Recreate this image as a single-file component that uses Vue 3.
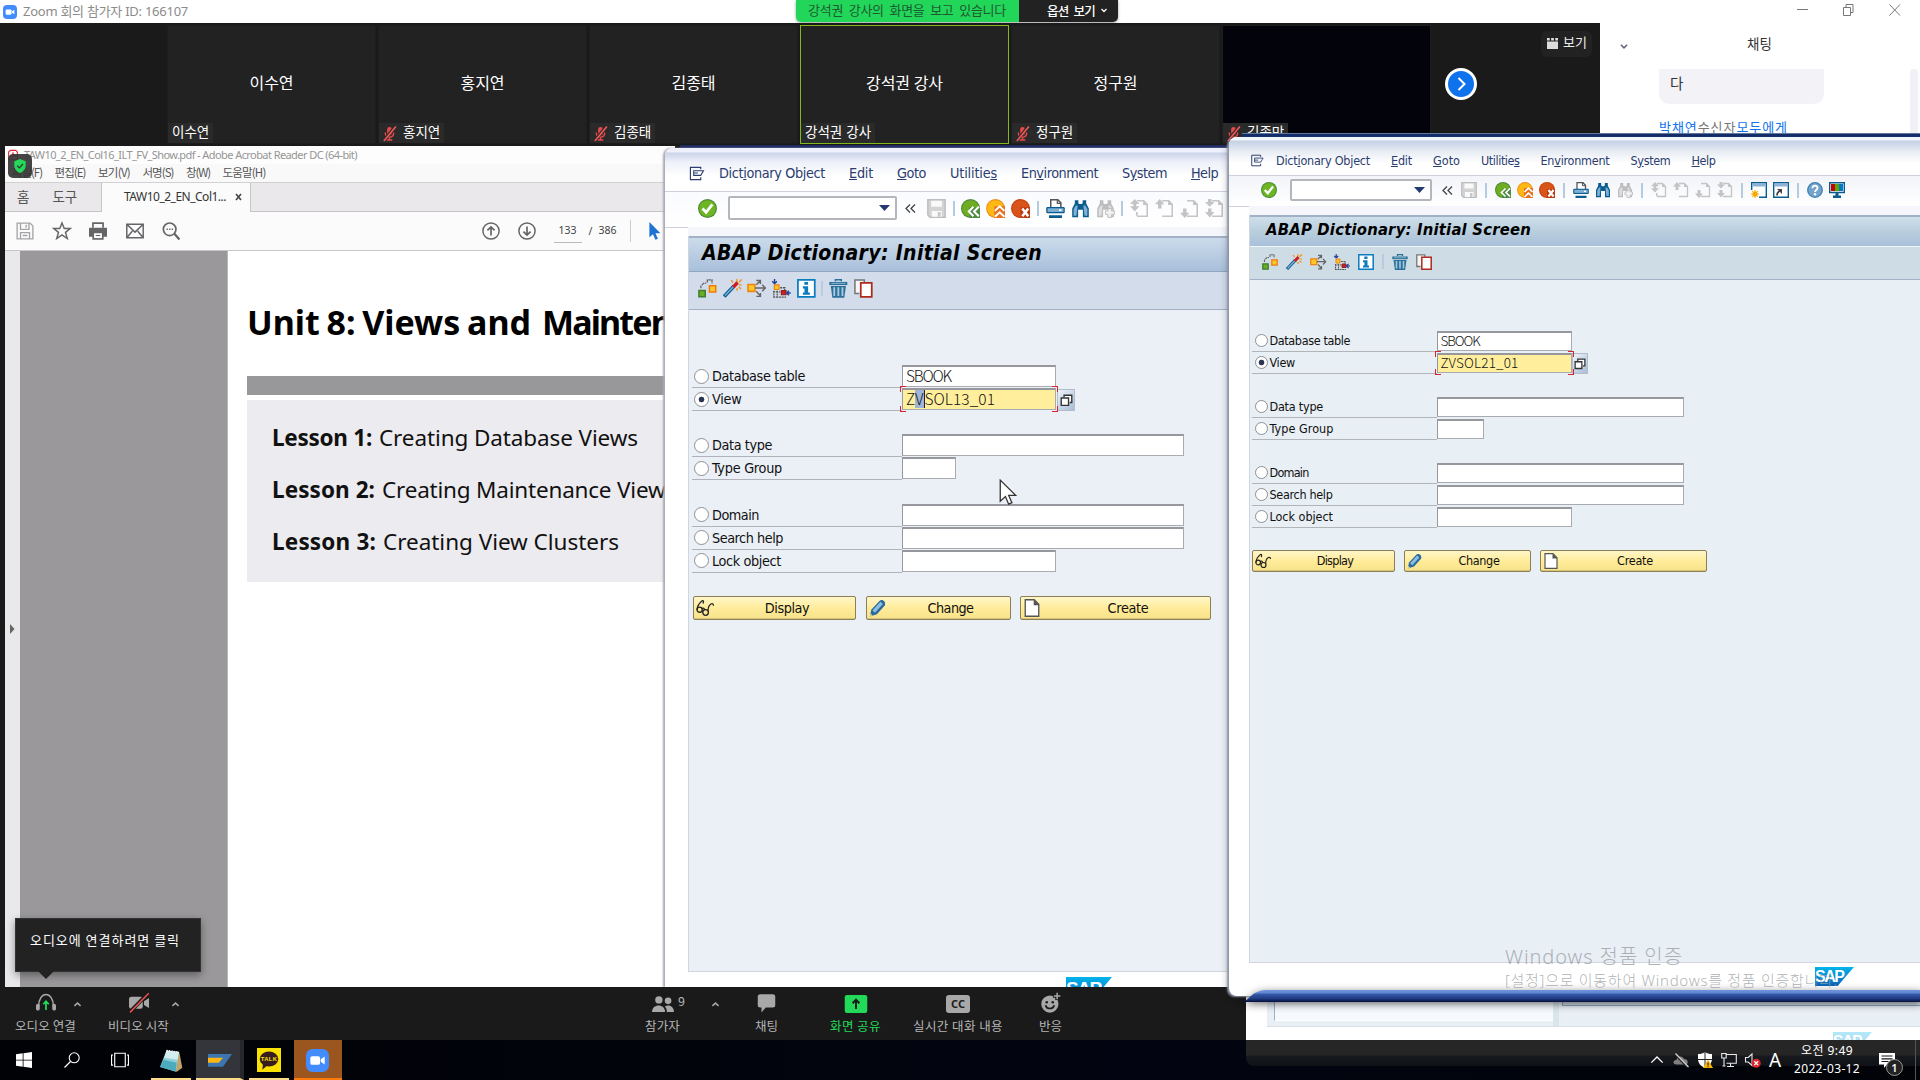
<script setup>
import { h } from 'vue'

const page = '<path d="M6 1.5h5.5l3 3v10H6" fill="none" stroke="#c4c4c4" stroke-width="1.3"/><path d="M11 1v4h4z" fill="#c4c4c4"/>'
const binoc = (a, b) => `<path d="M3.2 1h3v2.5l.8.8h2l.8-.8V1h3v2.8L15 8v7.3h-5V9H6v6.300H1V8l2.200-4.200z" fill="${a}"/><path d="M4 5.500h1.600L4.600 14H2.200V8.500zM12 5.500h-1.600l1 8.500h2.400V8.500z" fill="${b}"/>`
const icons = {
  exit: '<path d="M12.500 3.500V1.500H1.500v13h11v-2.500" fill="none" stroke="currentColor" stroke-width="1.200"/><path d="M5 5h10.500L12.500 10H5zM5 7.500h4.500" fill="#fff" stroke="currentColor" stroke-width="1.100"/>',
  ok: '<circle cx="8" cy="8" r="8" fill="#4d8a3c"/><circle cx="8" cy="8" r="7" fill="#6db523"/><path d="M3.800 8l3 3.200 5.300-6.700" fill="none" stroke="#fff" stroke-width="2.300"/>',
  save: '<path d="M.7.700h14.600v14.600H2.500L.7 13.500z" fill="#d3d3d3" stroke="#bdbdbd" stroke-width="1.200"/><path d="M3.500 1.500h9v5h-9zM4 10h8.500v5H4z" fill="#fafafa"/><path d="M9 11h2.500v4H9z" fill="#c9c9c9"/>',
  back: '<circle cx="8" cy="8" r="8" fill="#4d8a3c"/><circle cx="8" cy="8" r="7" fill="#6eac22"/><path d="M7 7h9v9H7z" fill="#4f8a45"/><path d="M10.500 6.500L6.500 10.500l4 4M15 6.500l-4 4 4 4" fill="none" stroke="#fff" stroke-width="1.700"/>',
  up: '<circle cx="8" cy="8" r="7.900" fill="#f08a14"/><circle cx="8" cy="8" r="7" fill="#fdb813"/><path d="M7 6h9v10H7z" fill="#e9701c"/><path d="M7.500 10l4-3.800 4 3.800M7.500 15l4-3.800 4 3.800" fill="none" stroke="#fff" stroke-width="1.700"/>',
  cancel: '<circle cx="8" cy="8" r="8" fill="#c8420f"/><circle cx="8" cy="8" r="7" fill="#d9541a"/><path d="M8 7h8v9H8z" fill="#bd3b12"/><path d="M9.500 8l5 6.500M14.500 8l-5 6.500" stroke="#fff" stroke-width="2.100"/>',
  print: '<path d="M4 7V.7h6l2.500 2.500V7" fill="#fff" stroke="#555" stroke-width="1.300"/><path d="M9.500 1v2.700h3" fill="none" stroke="#555"/><rect x=".2" y="6.700" width="15.600" height="5.300" rx="1" fill="#0b5c8e"/><rect x="1.300" y="7.800" width="13.400" height="3.100" fill="#7eb0d4"/><path d="M11 8.700h2v1.300h-2z" fill="#fff"/><path d="M2.500 13.700h11V16h-11z" fill="#0b5c8e"/>',
  find: binoc('#0b5c8e', '#7fb0d6'),
  findn: binoc('#bdbdbd', '#dedede') + '<path d="M8 10h2V8h3v2h2.500v3H13v2.500h-3V13H8z" fill="#f2f2f2" stroke="#bdbdbd" stroke-width=".8"/>',
  p1: page + '<path d="M4 0l4 4.200H5.300v2H8l-4 4.300L0 6.200h2.700v-2H0zM5 11h1.500v3H5z" fill="#c4c4c4"/>',
  p2: page + '<path d="M4 0l4 4.500H5.500V8h-3V4.500H0z" fill="#c4c4c4"/>',
  p3: page + '<path d="M4 16l4-4.500H5.500V8h-3v3.500H0z" fill="#c4c4c4"/>',
  p4: page + '<path d="M2.500 0h3v2.500H8L4 6.500 0 2.500h2.500zM2.500 8h3v3H8l-4 4.500L0 11h2.500z" fill="#c4c4c4"/>',
  newwin: '<path d="M.7.700h14.600v14.600H.7z" fill="#fff" stroke="#0b5c8e" stroke-width="1.400"/><path d="M1.300 1.300h13.400v3.200H1.300z" fill="#8db4d8"/><path d="M0 8h8v8H0z" fill="#fff"/><circle cx="4" cy="12" r="2.500" fill="#f7a800"/><path d="M4 8v8M0 12h8M1.200 9.200l5.600 5.600M6.800 9.200l-5.600 5.600" stroke="#f7a800" stroke-width="1.100"/>',
  shortcut: '<path d="M.7.700h14.600v14.600H.7z" fill="#fff" stroke="#0b5c8e" stroke-width="1.400"/><path d="M1.300 1.300h13.400v3.200H1.300z" fill="#8db4d8"/><path d="M4 13.500c0-3 1-4 3-4.500" fill="none" stroke="#444" stroke-width="1.700"/><path d="M4 7h5v5z" fill="#444"/>',
  help: '<circle cx="8" cy="8" r="7.300" fill="#74a4cc" stroke="#3f7fb3" stroke-width="1.300"/><path d="M5.500 6.300c0-3.500 5-3.300 5-.3 0 2-2.500 2-2.500 3.900" fill="none" stroke="#fff" stroke-width="1.800"/><circle cx="8" cy="12.200" r="1.200" fill="#fff"/>',
  monitor: '<path d="M.7.700h14.600v9.800H.7z" fill="#fff" stroke="#0b5c8e" stroke-width="1.400"/><path d="M2 2h4v7H2z" fill="#c80000"/><path d="M6 2h4v7H6z" fill="#59a800"/><path d="M10 2h4v7h-4z" fill="#0079c8"/><path d="M6.500 11h3v2.500H12V16H4v-2.500h2.500z" fill="#0b5c8e"/>',
  boxes: '<path d="M.8 9.800h5.400v5.400H.8z" fill="#6aad24" stroke="#3f7f2f" stroke-width="1.300"/><path d="M9.800 5.800h5.400v5.400H9.800z" fill="#ffc629" stroke="#ee7b12" stroke-width="1.300"/><path d="M2.500 8V6L5 3.500l2 0M8 3V.7h4V4" fill="none" stroke="#666" stroke-width="1.100" stroke-dasharray="2.500 .6"/>',
  wand: '<path d="M1 15L9.500 6" stroke="#0b5c8e" stroke-width="3.200"/><path d="M1.700 14.200L9.300 6.200" stroke="#79aed6" stroke-width="1.300"/><path d="M7 1l1.500 2M12 0v2.500M16 .5l-2.500 2.200M16 5h-2.500M15.500 8.500l-2-1.500M12 8v2" stroke="#f39317" stroke-width="1.200"/><path d="M8.800 7l3.700-4" stroke="#cf1d1d" stroke-width="3"/>',
  where: '<path d="M.8 4.800h6v5.800h-6z" fill="#ffc629" stroke="#ee8412" stroke-width="1.300"/><path d="M7 7.700h8.500M13 5l2.700 2.700L13 10.500M8 5l3-3M8 1.300h3.500v3M8 10.500l3 3.500M8 14.900h3.500v-3" fill="none" stroke="#666" stroke-width="1.200"/>',
  tree: '<path d="M2.200 0v3.500M.2 2l2 2 2-2" fill="none" stroke="#21409a" stroke-width="1.200"/><path d="M2 5h4v4H2z" fill="#ffc629" stroke="#ee8412"/><path d="M8 10h4v3.500H8z" fill="#d31f1f" stroke="#8a2222"/><path d="M1.500 10v6M1 15.500h11M4.500 10v6M1 11h6M7 7.500h4v2" fill="none" stroke="#555" stroke-width="1.100" stroke-dasharray="1.800 .6"/><path d="M16 12h-3.500M14.500 10l-2 2 2 2" fill="none" stroke="#21409a" stroke-width="1.200"/>',
  info: '<path d="M.8.800h14.400v14.400H.8z" fill="#fff" stroke="#0b7cc0" stroke-width="1.500"/><path d="M6.300 2.500h3.200v2.400H6.300zM5 6.200h4.500v5.300H11v2H5v-2h1.400V8.200H5z" fill="#0b7cc0"/>',
  trash: '<path d="M5.500 2V.7h5V2" fill="none" stroke="#2c7099" stroke-width="1.300"/><path d="M.3 2.500h15.400v2.700H.3z" fill="#2c7099"/><path d="M1.500 6h13l-1.400 10H2.900z" fill="#2c7099"/><path d="M4.500 7v7.500M8 7v7.500M11.500 7v7.500" stroke="#a7cbe0" stroke-width="1.600"/><path d="M2 3.700h12" stroke="#8dbbd8" stroke-width=".8"/>',
  copy: '<path d="M4.500 12.500H.8V.8h8v2" fill="#f6f6f6" stroke="#757575" stroke-width="1.300"/><path d="M5.800 3.300h9.400v12H5.800z" fill="#fff" stroke="#b02a1c" stroke-width="1.500"/>',
  glasses: '<path d="M1 9.500C1 6 3 3.500 5.500 1.500 7 1 7 3 6 4" fill="none" stroke="#222" stroke-width="1.100"/><circle cx="3.200" cy="9.500" r="2.300" fill="none" stroke="#222" stroke-width="1.200"/><circle cx="8.500" cy="12" r="2.500" fill="none" stroke="#222" stroke-width="1.200"/><path d="M5.300 8.500c1.500-1 2.200 0 2.200 1.200M10.700 10.500c0-2 1-5 2.600-6 1.500-.8 2.200.2 2.200 1.500" fill="none" stroke="#222" stroke-width="1.100"/>',
  pencil: '<path d="M.8 15.500L2 9.500 9.500 1.500c2.300-1.800 6 1 4.500 4.200L7 13.500z" fill="#2a6a9c"/><path d="M4.200 11.200L11.200 3.500" stroke="#8cbde2" stroke-width="3"/><path d="M.8 15.500l.6-2.600 1.800 1.600z" fill="#e8d8a8"/>',
  page: '<path d="M2 .7h8l4 4v10.600H2z" fill="#fff" stroke="#555" stroke-width="1.200"/><path d="M9.500.5v5h5z" fill="#555"/>',
  f4: '<path d="M5 4V1.500h9.500v9H12" fill="#fff" stroke="#333" stroke-width="1.700"/><path d="M1.500 5h9v9h-9z" fill="#fff" stroke="#333" stroke-width="1.700"/>',
  mic: '<rect x="5.500" y="1" width="5" height="9" rx="2.500" fill="#e84a4a"/><path d="M3.500 7c0 6.500 9 6.500 9 0M8 12v3M5 15h6" fill="none" stroke="#e84a4a" stroke-width="1.500"/><path d="M14.500 0L1.500 16" stroke="#2a2a2a" stroke-width="3"/><path d="M14.800 .5L2 16" stroke="#f05a5a" stroke-width="1.700"/>',
  chev: '<path d="M3 6l5 5 5-5" fill="none" stroke="currentColor" stroke-width="2.500"/>',
  chevUp: '<path d="M2.500 10.500L8 5.500l5.500 5" fill="none" stroke="currentColor" stroke-width="2.600"/>',
  chevThin: '<path d="M1.500 11L8 4.500 14.500 11" fill="none" stroke="currentColor" stroke-width="1.500"/>',
  zoomCam: '<rect width="16" height="16" rx="4.500" fill="#438cff"/><rect x="3" y="5" width="6.800" height="6" rx="1.300" fill="#fff"/><path d="M10.300 7.200L13 5.300v5.400l-2.700-1.900z" fill="#fff"/>',
  floppy: '<path d="M1 1h11.500L15 3.500V15H1zM4 1v5.500h7.500V1M4 15V9.500h8V15M9 2.500v2.500M6 12h4" fill="none" stroke="#a5a5a7" stroke-width="1.200"/>',
  star: '<path d="M8 .8l2 5h5.300l-4.200 3.400 1.600 5.500L8 11.500l-4.700 3.200 1.600-5.500L.7 5.800H6z" fill="none" stroke="#656467" stroke-width="1.300"/>',
  printer: '<path d="M3.500 5V1h9v4" fill="none" stroke="#656467" stroke-width="1.500"/><path d="M0 5h16v8h-3v2.700H3V13H0z" fill="#656467"/><path d="M4.500 10h7v4.300h-7z" fill="#fff"/><path d="M6 12h4" stroke="#656467"/>',
  mail: '<path d="M.7 2h14.600v12H.7zL8 9l7.300-7M.7 14l5-6M15.300 14l-5-6" fill="none" stroke="#656467" stroke-width="1.300"/>',
  lens: '<circle cx="6.800" cy="6.500" r="5.600" fill="none" stroke="#656467" stroke-width="1.500"/><path d="M11 10.500l4.500 5" stroke="#656467" stroke-width="2"/><path d="M4 6.500h1.200M6.300 6.500h1.200M8.600 6.500h1.200" stroke="#656467" stroke-width="1.300"/>',
  cUp: '<circle cx="8" cy="8" r="7.200" fill="none" stroke="#656467" stroke-width="1.300"/><path d="M8 12V4.500M4.800 7.500L8 4.300l3.200 3.200" fill="none" stroke="#656467" stroke-width="1.500"/>',
  cDown: '<circle cx="8" cy="8" r="7.200" fill="none" stroke="#656467" stroke-width="1.300"/><path d="M8 4v7.500M4.800 8.500L8 11.700l3.200-3.200" fill="none" stroke="#656467" stroke-width="1.500"/>',
  pointer: '<path d="M3 0v13.500l3.200-2.700 2.200 5 2.200-1-2.200-4.800h4.400z" fill="#1d73d2"/>',
  cursor: '<path d="M2 .7v13l3.200-2.900 2 4.700 2-.9-2-4.500h4.300z" fill="#fff" stroke="#333" stroke-width=".8"/>',
  shield: '<path d="M8 0l6.500 2.500v5C14.500 12 11 15 8 16c-3-1-6.500-4-6.500-8.500v-5z" fill="#23d959"/><path d="M4.800 7.800l2.400 2.400 4.200-4.500" fill="none" stroke="#333" stroke-width="1.500"/>',
  pdf: '<path d="M1 3l3-2.500h8.500L15 3v12.500H1z" fill="#fff" stroke="#e02a35" stroke-width="1.800"/><path d="M4 12c3-2 4-5 4-8 0 3 2 5 4.500 6C9.500 9 7 10 4 12z" fill="none" stroke="#e02a35" stroke-width="1.500"/>',
  audio: '<path d="M2 11C2-2 14-2 14 11" fill="none" stroke="#a8a8a8" stroke-width="1.200"/><rect y="8.500" width="3" height="5.500" rx="1.500" fill="#a8a8a8"/><rect x="13" y="8.500" width="3" height="5.500" rx="1.500" fill="#a8a8a8"/><path d="M8 13.500V7M5.800 9L8 6.700 10.200 9" fill="none" stroke="#23d959" stroke-width="1.400"/>',
  video: '<rect y="3" width="11" height="9.500" rx="1.800" fill="#a8a8a8"/><path d="M12 6.500l4-2.500v8l-4-2.500z" fill="#a8a8a8"/><path d="M15.500 0L.5 15.500" stroke="#1a1a1a" stroke-width="3"/><path d="M15.800 .2L.8 15.500" stroke="#e8514f" stroke-width="1.200"/>',
  people: '<circle cx="5" cy="5" r="2.700" fill="#a8a8a8"/><path d="M0 13.800C0 7.500 9.500 7.500 9.500 13.800z" fill="#a8a8a8"/><circle cx="11.700" cy="5.700" r="2.400" fill="#a8a8a8"/><path d="M10.800 13.800c0-2-.5-3-1.500-4 3-2 6.700 0 6.700 4z" fill="#a8a8a8"/>',
  bubble: '<path d="M3 1h10c1.500 0 2 .7 2 2v6.500c0 1.500-.7 2-2 2H7.500L4 15.500v-4H3c-1.300 0-2-.6-2-2V3c0-1.300.6-2 2-2z" fill="#a8a8a8"/>',
  share: '<rect x="-2" y="0" width="20" height="16" rx="2" fill="#23d959"/><path d="M8 12.500V4.500M5 7.300L8 4.200l3 3.100" fill="none" stroke="#1a1a1a" stroke-width="1.700"/>',
  react: '<circle cx="7.500" cy="8.800" r="6.900" fill="#a8a8a8"/><circle cx="5" cy="7.300" r="1" fill="#1a1a1a"/><circle cx="9.800" cy="7.300" r="1" fill="#1a1a1a"/><path d="M4 9.800c1 3.500 6 3.500 7 0" fill="none" stroke="#1a1a1a" stroke-width="1.300"/><path d="M13.300 -1v6.500M10 2.300h6.500" stroke="#1a1a1a" stroke-width="3"/><path d="M13.300 -.3v5.200M10.700 2.300h5.200" stroke="#a8a8a8" stroke-width="1.200"/>',
  win: '<path d="M0 2.300l6.700-1v6.400H0zM7.500 1.200L16 0v7.700H7.500zM0 8.400h6.700v6.400L0 13.800zM7.500 8.400H16V16l-8.500-1.200z" fill="#fff"/>',
  search: '<circle cx="10.200" cy="5.800" r="5" fill="none" stroke="#fff" stroke-width="1.100"/><path d="M6.500 9.500L.5 15.500" stroke="#fff" stroke-width="1.300"/>',
  taskview: '<path d="M3.300 2h9.400v12H3.300zM1.800 3.500H.5v9h1.300M14.200 3.500h1.300v9h-1.300" fill="none" stroke="#fff"/>',
  notepad: '<path d="M4.500 1.500L13.500 2.500l2 10.500-4 3z" fill="#c4a36a"/><path d="M4.500 1L13.200 2 11 15.800 0 12.500z" fill="#8fd0d8"/><path d="M4.500 1L13.200 2l-1 5.500L3 6z" fill="#d2eef0"/><path d="M2.500 7.500l9 2-.6 6.200L0 12.500z" fill="#38a2b6" opacity=".8"/><path d="M4.500 1.200L13.200 2.300" stroke="#efefef" stroke-width="1.300" stroke-dasharray="1 .7"/>',
  sapgui: '<path d="M0 2h16l-6 8.500H0z" fill="#3c76b0" transform="translate(0 2)"/><path d="M0 6.500h10l-2.800 3.300H0z" fill="#ffb612"/>',
  talk: '<path d="M0 0h16v16H0z" fill="#fae100"/><ellipse cx="8" cy="7.300" rx="6.200" ry="5" fill="#371d1e"/><path d="M4 10.500l-.5 4 3.500-3z" fill="#371d1e"/>',
  cloud: '<path d="M3.500 12.500C-1 12.500 0 7.500 3.500 8 4 3.500 10 3.500 11 7c4-.5 5 5 2 5.500z" fill="#808080"/><path d="M2 2l12.500 13" stroke="#222" stroke-width="2.500"/><path d="M2.500 1.500L15.500 15" stroke="#ddd" stroke-width="1.100"/>',
  defender: '<path d="M8 0c2 1.500 4 2 7 2v5c0 4.500-3.500 7.500-7 9-3.500-1.500-7-4.500-7-9V2c3 0 5-.5 7-2z" fill="#fff"/><path d="M8 0v16M1 7.500h14" stroke="#222" stroke-width="1"/><path d="M11 7.500l5 8.500H6z" fill="#f7b500"/><path d="M11 10.500v3M11 14.200v1" stroke="#222" stroke-width="1.100"/>',
  net: '<path d="M4.500 2.500h10.800v8.800H5.500M9.500 11.500V14M6 14.500h7M.7 1.500h4.500v4.500H.7zM3 6v8M1.500 14h3" fill="none" stroke="#e8e8e8" stroke-width="1.100"/>',
  vol: '<path d="M.5 5.500h2.700L7 2v11.500L3.200 10H.5z" fill="none" stroke="#e8e8e8" stroke-width="1.100"/><circle cx="11.200" cy="11.200" r="4.500" fill="#e0242b"/><path d="M9.300 9.300l3.800 3.800M13.100 9.300l-3.800 3.800" stroke="#fff" stroke-width="1.300"/>',
  note: '<path d="M0 1h16v11.500h-8L5 16v-3.500H0z" fill="#fff"/><path d="M2.500 4h11M2.500 6.800h11M2.500 9.500h7" stroke="#151515" stroke-width="1.200"/>',
  grid: '<path d="M0 0h4v3.500H0zM6 0h4v3.500H6zM12 0h4v3.500h-4zM0 5h16v11H0z" fill="#dcdcdc"/>',
}
const Ico = (p) => h('svg', { class: 'ico', viewBox: '0 0 16 16', innerHTML: icons[p.name] })
Ico.props = ['name']

/* Tracks text so that it fills the given width in pixels. */
const vTrack = {
  mounted(el, { value }) {
    if (!value) return
    el.style.letterSpacing = (value - el.getBoundingClientRect().width) / el.textContent.length + 'px'
    el.style.width = value + 'px'
  },
}

const people = [
  { name: '이수연', muted: false },
  { name: '홍지연', muted: true },
  { name: '김종태', muted: true },
  { name: '강석권 강사', muted: false, active: true },
  { name: '정구원', muted: true },
  { name: '김종만', muted: true, dark: true },
]

const menus = [
  ['Dict<u>i</u>onary Object', 106, 94], ['<u>E</u>dit', 24, 21], ['<u>G</u>oto', 29, 27], ['Utilitie<u>s</u>', 47, 38.500],
  ['En<u>v</u>ironment', 77, 69], ['S<u>y</u>stem', 45, 40], ['<u>H</u>elp', 27, 24],
]
const tools = ['save', '|', 'back', 'up', 'cancel', '|', 'print', 'find', 'findn', '|', 'p1', 'p2', 'p3', 'p4', '|', 'newwin', 'shortcut', '|', 'help', 'monitor']
const appTools = ['boxes', 'wand', 'where', 'tree', 'info', '|', 'trash', 'copy']
const rows = [
  ['Database table', 93, 80.500, 'mid'], ['View', 29.500, 25.500, 'mid'], null,
  ['Data type', 60, 53.500, 'long'], ['Type Group', 70, 64, 'short'], null,
  ['Domain', 47, 39, 'long'], ['Search help', 71, 63, 'long'], ['Lock object', 69, 63.500, 'mid'],
]
const actions = [['glasses', 'Display', 44.500, 36.500], ['pencil', 'Change', 46, 41], ['page', 'Create', 41, 36]]
const wins = [
  { id: 'w1', i: 1, title: 340, book: 45, view: [['Z', 9], ['V', 9.500], ['SOL13_01', 70.500]] },
  { id: 'w2', i: 2, title: 265, book: 39, view: [['ZVSOL21_01', 78]] },
]
const lessons = [
  ['Lesson 1:', 100, 'Creating Database Views', 259], ['Lesson 2:', 103, 'Creating Maintenance Views', 294], ['Lesson 3:', 104, 'Creating View Clusters', 236],
]
const pdfMenu = [['파일(F)', 30], ['편집(E)', 31], ['보기(V)', 32], ['서명(S)', 31], ['창(W)', 24], ['도움말(H)', 43]]
</script>

<template>
  <div class="desktop">
    <section class="zoom">
      <header class="ztitle">
        <Ico name="zoomCam" /><span v-track="165">Zoom 회의 참가자 ID: 166107</span>
        <div class="ctl">
          <svg width="12" height="12"><path d="M0 5.500h11" stroke="#777" /></svg>
          <svg width="12" height="12"><path d="M.5 3.500h7v8h-7zM3 3V.5h7v8H8" fill="none" stroke="#777" /></svg>
          <svg width="12" height="12"><path d="M.5.500l10.500 11M11 .5L.5 11.500" stroke="#777" /></svg>
        </div>
      </header>
      <div class="banner">
        <div class="watching"><span v-track="198">강석권 강사의 화면을 보고 있습니다</span></div>
        <div class="opt"><span v-track="48">옵션 보기</span><Ico name="chev" /></div>
      </div>
      <div class="mid">
        <div class="gallery">
          <div v-for="p in people" :key="p.name" class="tile" :class="{ active: p.active, dark: p.dark }">
            <b v-if="!p.dark">{{ p.name }}</b>
            <span class="tag"><Ico v-if="p.muted" name="mic" />{{ p.name }}</span>
          </div>
          <div class="next"><svg width="32" height="32" viewBox="0 0 32 32"><circle cx="16" cy="16" r="14.500" fill="#0e72ed" stroke="#fff" stroke-width="3" /><path d="M13.500 10l6 6-6 6" fill="none" stroke="#fff" stroke-width="2" /></svg></div>
          <div class="viewbtn"><Ico name="grid" />보기</div>
        </div>
        <aside class="chat">
          <div class="chead"><Ico name="chev" /><span>채팅</span></div>
          <div class="cbody"><div class="msgs"><div class="msg">다</div><div class="who"><span v-track="129">박채연<i>수신자</i>모두에게</span></div></div><div class="scroll"></div></div>
        </aside>
      </div>
    </section>

    <section class="acro">
      <div class="atitle"><Ico name="pdf" /><span v-track="333">TAW10_2_EN_Col16_ILT_FV_Show.pdf - Adobe Acrobat Reader DC (64-bit)</span></div>
      <div class="amenu"><span v-for="m in pdfMenu" :key="m[0]" v-track="m[1]">{{ m[0] }}</span></div>
      <div class="atabs">
        <div class="home"><span>홈</span><span>도구</span></div>
        <div class="tab"><span v-track="102">TAW10_2_EN_Col1...</span><svg width="8" height="8"><path d="M1 1l5 6M6 1L1 7" stroke="#444" stroke-width="1.600" /></svg></div>
      </div>
      <div class="atools">
        <Ico name="floppy" /><Ico name="star" /><Ico name="printer" /><Ico name="mail" /><Ico name="lens" />
        <div class="nav"><Ico name="cUp" /><Ico name="cDown" /><span class="pg">133</span><span>/</span><span class="tot">386</span><Ico name="pointer" /></div>
      </div>
      <div class="adoc">
        <div class="rail"><svg width="5" height="10"><path d="M0 0l4.500 5L0 10z" fill="#666" /></svg></div>
        <div class="grey"></div>
        <div class="sheet">
          <h1><span v-track="284">Unit 8: Views and</span><span v-track="202">Maintenance</span></h1>
          <div class="bar"></div>
          <div class="lessons">
            <p v-for="l in lessons" :key="l[0]"><b v-track="l[1]">{{ l[0] }}</b><span v-track="l[3]">{{ l[2] }}</span></p>
          </div>
        </div>
      </div>
    </section>
    <div class="badge"><Ico name="shield" /></div>

    <section class="back3">
      <div class="b3in"><div class="b3a"></div><div class="b3b"></div><div class="b3c"></div></div>
      <div class="sap3 logo">SAP</div>
    </section>

    <div class="band t1"></div>
    <div class="band t2"></div>
    <svg class="bottomband" width="680" height="12" viewBox="0 0 680 12">
      <defs><linearGradient id="bb" x2="0" y2="1"><stop offset="0" stop-color="#6f94dd" /><stop offset=".25" stop-color="#5f86d2" /><stop offset=".35" stop-color="#3558a8" /><stop offset=".7" stop-color="#203c85" /><stop offset="1" stop-color="#06113c" /></linearGradient></defs>
      <path d="M0 12C8 11 8 1 24 0h656v12z" fill="url(#bb)" />
    </svg>

    <section v-for="w in wins" :key="w.id" class="sap" :class="w.id">
      <div class="menu"><Ico name="exit" /><span v-for="m in menus" :key="m[0]" v-track="m[w.i]" v-html="m[0]"></span></div>
      <div class="tools">
        <Ico name="ok" />
        <div class="cmd"><svg width="11" height="6"><path d="M0 0h11L5.500 6z" fill="#243a73" /></svg></div>
        <svg class="dbl" width="11" height="9" viewBox="0 0 11 9"><path d="M5 .5l-4 4 4 4M10 .5l-4 4 4 4" fill="none" stroke="#444" stroke-width="1.300" /></svg>
        <template v-for="(t, k) in tools" :key="k"><i v-if="t === '|'"></i><Ico v-else :name="t" /></template>
      </div>
      <div class="body">
        <div class="title"><span v-track="w.title">ABAP Dictionary: Initial Screen</span></div>
        <div class="appbar"><template v-for="(t, k) in appTools" :key="k"><i v-if="t === '|'"></i><Ico v-else :name="t" /></template></div>
        <div class="content">
          <div v-for="(r, k) in rows" :key="k" class="row">
            <template v-if="r">
              <div class="lab"><span class="radio" :class="{ on: k === 1 }"></span><span v-track="r[w.i]">{{ r[0] }}</span></div>
              <div class="fld" :class="[r[3], { hot: k === 1 }]">
                <span v-if="k === 0" v-track="w.book">SBOOK</span>
                <template v-if="k === 1">
                  <span v-for="(v, n) in w.view" :key="n" v-track="v[1]" :class="{ sel: w.i === 1 && n === 1 }">{{ v[0] }}</span>
                  <em></em><em></em><em></em><em></em>
                </template>
              </div>
              <div v-if="k === 1" class="f4"><Ico name="f4" /></div>
            </template>
          </div>
          <div class="actions">
            <div v-for="a in actions" :key="a[1]" class="btn" :class="a[0]"><Ico :name="a[0]" /><div><span v-track="a[w.i + 1]">{{ a[1] }}</span></div></div>
          </div>
        </div>
      </div>
      <div class="foot"><div class="logo">SAP</div></div>
    </section>

    <svg class="mouse" width="24" height="26" viewBox="0 0 14.800 16"><g v-html="icons.cursor"></g></svg>
    <div class="mark"><div><span v-track="178">Windows 정품 인증</span></div><p><span v-track="333">[설정]으로 이동하여 Windows를 정품 인증합니다.</span></p></div>

    <div class="tip"><span v-track="150">오디오에 연결하려면 클릭</span></div>
    <section class="zbar">
      <div class="zb a"><Ico name="audio" /><span v-track="61">오디오 연결</span></div><Ico class="cv c1" name="chevUp" />
      <div class="zb v"><Ico name="video" /><span v-track="61">비디오 시작</span></div><Ico class="cv c2" name="chevUp" />
      <div class="zb p"><Ico name="people" /><span v-track="35">참가자</span></div><div class="nine">9</div><Ico class="cv c3" name="chevUp" />
      <div class="zb c"><Ico name="bubble" /><span v-track="23">채팅</span></div>
      <div class="zb s"><Ico name="share" /><span v-track="51">화면 공유</span></div>
      <div class="zb cc"><div class="ccbox">CC</div><span v-track="90">실시간 대화 내용</span></div>
      <div class="zb r"><Ico name="react" /><span v-track="23">반응</span></div>
    </section>

    <footer class="task">
      <div class="ghost"></div>
      <div class="tk"><Ico name="win" class="s16" /></div>
      <div class="tk"><Ico name="search" class="s16" /></div>
      <div class="tk"><Ico name="taskview" class="s20" /></div>
      <div class="tk run np"><Ico name="notepad" class="s22" /></div>
      <div class="tk run gui"><Ico name="sapgui" class="s24" /></div>
      <div class="tk run kk"><Ico name="talk" class="s24" /><b>TALK</b></div>
      <div class="tk run zm"><Ico name="zoomCam" class="s22" /></div>
      <div class="tray">
        <Ico name="chevThin" class="tc" /><Ico name="cloud" /><Ico name="defender" /><Ico name="net" /><Ico name="vol" /><span class="ime">A</span>
        <div class="clock"><span v-track="52">오전 9:49</span><span v-track="66">2022-03-12</span></div>
        <div class="noti"><Ico name="note" /><b>1</b></div>
        <div class="peek"></div>
      </div>
    </footer>
  </div>
</template>

<style>
body { overflow: hidden; }
</style>

<style scoped>
.desktop { position: relative; width: 1920px; height: 1080px; overflow: hidden; background: #1a1a1a; font-family: "Noto Sans CJK KR", sans-serif; white-space: nowrap; }
.desktop * { box-sizing: border-box; }
.desktop span { display: inline-block; flex: none; }
.ico { width: 16px; height: 16px; flex: none; display: block; overflow: visible; }
h1, p { margin: 0; }

.zoom { position: absolute; inset: 0 0 auto 0; }
.ztitle { height: 23px; background: #fff; display: flex; align-items: center; padding: 0 19px 0 3px; color: #8b8b8b; font: 13px/21px "Noto Sans", "Noto Sans CJK KR", sans-serif; }
.ztitle .ico { width: 14px; height: 14px; margin-right: 6px; }
.ctl { margin-left: auto; display: flex; gap: 34px; padding-bottom: 3px; }
.banner { position: absolute; left: 796px; top: 0; display: flex; height: 22px; border-radius: 0 0 5px 5px; overflow: hidden; font-size: 13px; line-height: 19px; word-spacing: 3px; box-shadow: 0 1px 3px #0006; }
.watching { width: 223px; background: #22d65a; color: #1d5a31; padding-left: 12px; }
.opt { width: 99px; background: #222; color: #fff; padding: 0 0 2px 28px; display: flex; align-items: center; gap: 5px; font-weight: 500; font-size: 12.500px; }
.opt .ico { width: 8px; height: 8px; }
.mid { display: flex; }
.gallery { width: 1600px; height: 123px; background: #1a1a1a; padding: 2px 0 0 167px; display: flex; gap: 2px; position: relative; }
.tile { width: 209px; height: 119px; background: #222; border: 1px solid #1d1d1d; position: relative; display: flex; justify-content: center; line-height: 112px; color: #fff; }
.tile b { font-weight: 400; font-size: 16px; }
.tile.active { border-color: #83b81c; }
.tile.dark { background: #03030c; }
.tag { position: absolute; left: 0; bottom: 0; height: 20px; line-height: 16px; padding: 0 4px; background: #2a2a2a; font-size: 13.500px; word-spacing: 1px; }
.tag .ico { display: inline-block; width: 15px; height: 15px; margin: 0 6px 0 -1px; vertical-align: -4px; }
.next { padding: 43px 0 0 12px; }
.viewbtn { position: absolute; left: 1541px; top: 8px; width: 51px; height: 26px; border-radius: 6px; background: #222; color: #eee; display: flex; align-items: center; gap: 5px; padding: 0 0 5px 6px; font-size: 13px; }
.viewbtn .ico { width: 11px; height: 11px; margin-top: 3px; }
.chat { width: 320px; height: 123px; background: #fff; color: #333; }
.chead { height: 46px; display: flex; align-items: center; padding: 0 0 6px 19px; font-size: 13.500px; }
.chead .ico { width: 10px; height: 10px; color: #667; margin-top: 5px; }
.chead span { margin-left: 118px; }
.cbody { display: flex; justify-content: space-between; padding: 0 2px 0 59px; }
.msg { width: 165px; height: 35px; background: #f2f2f7; border-radius: 0 0 10px 10px; padding-left: 11px; line-height: 28px; font-size: 14.500px; }
.who { color: #0e72ed; font-size: 13px; line-height: 19px; margin-top: 13px; }
.who i { font-style: normal; color: #777; }
.scroll { width: 8px; height: 78px; background: #f1f0f6; border-radius: 4px; }

.acro { position: absolute; left: 5px; top: 146px; width: 670px; height: 841px; background: #fff; display: flex; flex-direction: column; }
.atitle { height: 18px; display: flex; align-items: center; padding-left: 3px; font: 11px/18px "Noto Sans", "Noto Sans CJK KR", sans-serif; color: #959595; background: #fdfdfd; }
.atitle .ico { width: 10px; height: 12px; margin-right: 6px; }
.amenu { height: 18px; background: #f9f9f9; display: flex; gap: 12.500px; padding-left: 7px; font-size: 11.500px; line-height: 17px; color: #555; }
.atabs { height: 30px; background: #eae8ea; border-top: 1px solid #d2d0d2; border-bottom: 1px solid #c6c4c6; display: flex; }
.home { width: 97px; border-right: 1px solid #c6c4c6; display: flex; gap: 23px; padding-left: 12px; font-size: 13.500px; line-height: 27px; color: #555; }
.tab { width: 149px; height: 30px; background: #fbfbfb; border-right: 1px solid #c6c4c6; display: flex; align-items: center; gap: 9px; padding: 0 0 2px 22px; font: 12px/24px "Noto Sans", sans-serif; color: #333; }
.atools { height: 39px; background: #fbfbfc; border-bottom: 1px solid #c8c6c8; display: flex; align-items: center; gap: 18.500px; padding-left: 11px; font: 10.500px/20px "Noto Sans", sans-serif; color: #444; }
.atools .ico { width: 18px; height: 18px; }
.nav { display: flex; align-items: center; margin-left: 283px; }
.nav .ico { margin-right: 18px; }
.pg { width: 28px; margin: 2px 7px 0 0; text-align: center; border-bottom: 1px solid #bbb; height: 22px; line-height: 18px; }
.nav .tot { margin-left: 6px; padding-right: 14px; border-right: 1px solid #ccc; margin-right: 15px; height: 22px; line-height: 20px; }
.adoc { flex: 1; display: flex; }
.rail { width: 15px; background: #e9e8ea; padding: 364px 0 0 5px; }
.grey { width: 208px; background: #9a989b; border-right: 1px solid #b9b8ba; }
.sheet { padding: 50px 0 0 19px; width: 437px; }
h1 { font: 700 34px/42px "Noto Sans", sans-serif; color: #000; display: flex; gap: 11px; height: 44px; word-spacing: -2px; }
.bar { height: 19px; background: #98979a; margin-top: 31px; }
.lessons { margin-top: 5px; height: 182px; background: #ecebef; padding: 12px 0 0 25px; }
.lessons p { display: flex; gap: 7px; height: 52px; line-height: 52px; font-family: "Noto Sans", sans-serif; font-size: 22.500px; color: #111; }
.badge { position: absolute; left: 8px; top: 154px; width: 24px; height: 24px; border-radius: 5px; background: #333333e8; padding: 5px; }
.badge .ico { width: 14px; height: 14px; }

.band { position: absolute; right: 0; }
.t1 { left: 680px; top: 145px; height: 4px; background: #1e2b63; }
.t2 { left: 1242px; top: 133px; height: 5px; background: linear-gradient(#5f7b9c 20%, #142e6e 20%); z-index: 3; }
.bottomband { position: absolute; left: 1242px; top: 990px; z-index: 6; filter: drop-shadow(0 2px 4px #0008); }
.back3 { position: absolute; left: 1246px; top: 990px; width: 674px; height: 72px; background: #fff; padding-left: 21px; z-index: 2; }
.b3in { height: 37px; background: #e8eff5; display: flex; padding-left: 7px; border-bottom: 1px solid #d9dfe6; }
.b3a { width: 279px; height: 31px; background: #f6f9fe; border-left: 1px solid #9fb0c0; border-bottom: 1px solid #fff; }
.b3b { width: 6px; background: #dbe5ec; }
.b3c { flex: 1; margin-left: 3px; height: 16px; background: #d5e1ea; border: solid #8fa6b8; border-width: 0 0 1px 1px; }
.logo { width: 46px; height: 23px; background: linear-gradient(#00b5ec, #0d62b8); clip-path: polygon(0 0, 100% 0, 58% 100%, 0 100%); color: #fff; font: 700 19px/23px "Liberation Sans", sans-serif; letter-spacing: -1.500px; }
.back3 .logo { position: absolute; left: 587px; top: 42px; width: 39px; height: 19px; font-size: 16px; line-height: 19px; opacity: .3; }

.sap { position: absolute; display: flex; flex-direction: column; overflow: hidden; background: #fff; font-family: "DejaVu Sans Condensed", "DejaVu Sans", sans-serif; font-stretch: condensed; color: #111; }
.w1 { left: 665px; top: 148px; width: 570px; height: 839px; border-radius: 8px 0 0 0; box-shadow: -2px 0 2px #aaa9b5; font-size: 14.300px;
  --ic: 19px; --g: 6px; --sm: 7px; --mh: 44px; --mp: 7px; --mg: 24px; --th: 36px; --ti: 35px; --ab: 38px; --row: 23.100px; --lab: 210px; --mid: 154px; --long: 281.500px; --short: 54px; --r: 15px; }
.w2 { left: 1229px; top: 137px; width: 691px; height: 859px; border-radius: 8px 0 0 8px; z-index: 5; box-shadow: -2px 1px 2px #8e96a8, -1px 3px 8px #0004; font-size: 12.500px;
  --ic: 16px; --g: 6px; --sm: 8.300px; --mh: 39px; --mp: 8px; --mg: 21px; --th: 31px; --ti: 31px; --ab: 34px; --row: 22px; --lab: 185px; --mid: 135px; --long: 247px; --short: 47px; --r: 13px; }
.sap .ico { width: var(--ic); height: var(--ic); }
.menu { flex: none; height: var(--mh); border-bottom: 1px solid #cdd0dc; padding: var(--mp) 0 0 23px; display: flex; align-items: center; gap: var(--mg); color: #2a3c70; background: linear-gradient(#eef1fb 0, #eef1fb 4px, #ccd4ea 5px, #eef0f9 14px, #fff 28px); }
.w2 .menu { padding-left: 20px; background: linear-gradient(#eff5fc 0, #eff5fc 3px, #c4d0e3 4px, #e6ebf3 14px, #fff 26px); }
.menu .ico { width: 17px; height: 15px; margin-right: -10px; }
.w2 .menu .ico { width: 16px; height: 13px; margin-right: -10px; }
.w1 .menu { padding-left: 23px; }
.tools { flex: none; height: var(--th); border-bottom: 1px solid #ced1dc; display: flex; align-items: center; gap: var(--g); padding: 0 0 3px 33px; background: linear-gradient(#fafbfe, #fff); }
.w2 .tools { padding: 0 0 2px 32px; background: linear-gradient(#f2f4f9, #fff); }
.cmd { width: 169px; height: 24px; margin: 0 2.500px 0 4.500px; border: 2px solid #b4b6bb; background: #fff; border-radius: 2px; display: flex; justify-content: flex-end; align-items: center; padding-right: 5px; flex: none; }
.w2 .cmd { width: 142px; height: 22px; margin: 0 3.500px 0 7px; }
.dbl { margin-right: 5px; flex: none; }
.w2 .dbl { margin-right: 2px; }
.tools i, .appbar i { width: 2px; height: 15px; background: #b4cadf; flex: none; margin: 0 calc((var(--sm) - 6.300px)); }
.body { flex: 1; margin: 8px 0 0 23px; border-left: 1px solid #cfd6e2; border-bottom: 1px solid #d2d4e0; background: #ebf0f7; box-shadow: 0 -9px 0 #f4f6fc; }
.w2 .body { margin-left: 20px; background: #e8eff5; }
.title { height: calc(var(--ti) + 1px); border-top: 2px solid #a3b1c6; border-bottom: 1px solid #8fa7c0; background: linear-gradient(#cbdbeb, #a9c0da); padding-left: 13px; font-weight: 700; font-style: italic; font-size: 21px; line-height: 31px; color: #000; }
.w2 .title { padding-left: 16px; font-size: 16.500px; line-height: 26px; border-color: #a0b1c5 #a0b1c5 #f0f5fa; background: linear-gradient(#cfdfeb, #b9cedd 50%, #a8c0da); height: 32px; }
.appbar { height: var(--ab); background: #d2dcea; border-bottom: 1px solid #a2b0c6; display: flex; align-items: center; gap: 6px; padding: 0 0 4px 9px; }
.w2 .appbar { height: 33px; background: #cedce6; gap: 8px; padding: 0 0 3px 12px; }
.w1 .appbar .ico { width: 18.700px; height: 18.700px; }
.appbar i { margin: 0; background: #b9cbdc; }
.w2 .appbar i { margin: 0; }
.content { padding: 55px 0 0 3px; }
.w2 .content { padding: 50px 0 0 2px; }
.row { height: var(--row); display: flex; }
.lab { width: var(--lab); border-bottom: 1px solid #b0b3bb; display: flex; align-items: center; padding-left: 2px; }
.w2 .lab { padding-left: 3px; border-color: #b2b5b8; }
.radio { width: var(--r); height: var(--r); border-radius: 50%; border: 1.500px solid #8e8f94; background: #fff; margin-right: 3px; }
.w2 .radio { margin-right: 1.500px; }
.radio.on { background: radial-gradient(circle, #2b3450 0 2.500px, #fff 3.200px); }
.fld { margin-top: 0; border: 1px solid #a9abb1; border-top: 2px solid #96989e; border-left-color: #96989e; background: #fff; padding-left: 3px; font: 300 15.500px/17px "Noto Sans CJK KR", sans-serif; position: relative; display: flex; overflow: visible; }
.w2 .fld { font-size: 13.500px; line-height: 15px; height: 20px; margin-top: 1px; padding-left: 2.500px; }
.mid.fld { width: var(--mid); }
.long { width: var(--long); }
.short { width: var(--short); }
.hot { background: #ffee9c; }
.w1 .fld { height: 22px; }
.fld .sel { background: #9fb4d6; border-right: 1px solid #223; height: 18px; }
.hot em { position: absolute; width: 6px; height: 6px; border: 0 solid #d8242c; }
.hot em:nth-of-type(1) { left: -3px; top: -4px; border-width: 1.500px 0 0 1.500px; }
.hot em:nth-of-type(2) { right: -3px; top: -4px; border-width: 1.500px 1.500px 0 0; }
.hot em:nth-of-type(3) { left: -3px; bottom: -3px; border-width: 0 0 1.500px 1.500px; }
.hot em:nth-of-type(4) { right: -3px; bottom: -3px; border-width: 0 1.500px 1.500px 0; }
.f4 { margin: 1px 0 0 1px; width: 18px; background: linear-gradient(135deg, #eef3fa, #a9bdd8); border: 1px solid #b3bccb; display: flex; align-items: center; justify-content: center; }
.w2 .f4 { width: 16px; margin-left: 0; }
.sap .f4 .ico { width: 13px; height: 13px; }
.w2 .f4 .ico { width: 12px; height: 12px; }
.actions { display: flex; gap: 9.500px; margin-top: 23px; padding-left: 1px; }
.w2 .actions { gap: 9px; margin-top: 22px; padding-left: 0; }
.btn { height: 24px; border: 1px solid #8a7f57; border-radius: 2px; background: linear-gradient(#fff6c8, #ffec9a 50%, #f8e28a); display: flex; align-items: center; box-shadow: inset 0 -1px 0 #d8c57b; padding-left: 2px; }
.w2 .btn { height: 22px; }
.btn div { flex: 1; text-align: center; padding-left: 5px; line-height: 20px; }
.btn.glasses { width: 163px; }
.btn.pencil { width: 145px; }
.btn.page { width: 191px; }
.w2 .btn.glasses { width: 143px; }
.w2 .btn.pencil { width: 127px; }
.w2 .btn.page { width: 167px; }
.sap .btn .ico { width: 18px; height: 18px; }
.w2 .btn .ico { width: 16px; height: 16px; }
.foot { flex: none; height: 15px; padding: 5px 0 0 401px; }
.w2 .foot { height: 33px; padding: 4px 0 0 586px; }
.w2 .foot .logo { width: 39px; height: 19px; font-size: 16px; line-height: 19px; }
.mouse { position: absolute; left: 997px; top: 479px; }
.mark { position: absolute; left: 1505px; top: 943px; z-index: 8; color: #9da1a5d0; font: 300 20px/27px "Noto Sans", "Noto Sans CJK KR", sans-serif; }
.mark p { font-size: 15px; line-height: 21px; }

.tip { position: absolute; left: 15px; top: 918px; width: 186px; height: 54px; background: #222; border: 1px solid #333; color: #fff; font-size: 13px; line-height: 42px; padding-left: 14px; box-shadow: 0 3px 8px #0006; }
.tip::after { content: ""; position: absolute; left: 22px; top: 52px; border: 8px solid transparent; border-top-color: #222; border-bottom: 0; }
.zbar { position: absolute; left: 0; top: 987px; width: 1246px; height: 53px; background: #1a1a1a; color: #b5b5b5; display: flex; font-size: 12.500px; }
.zb { display: flex; flex-direction: column; align-items: center; flex: none; padding-top: 6px; line-height: 18px; gap: 4px; }
.zb .ico { width: 21px; height: 20px; }
.zb.a { width: 61px; margin-left: 15px; }
.zb.a .ico, .zb.v .ico { width: 24px; height: 20px; }
.cv { width: 9px; height: 9px; margin-top: 13px; color: #a8a8a8; }
.c1 { margin-left: -3px; }
.zb.v { width: 61px; margin-left: 26px; }
.c2 { margin-left: 2px; }
.zb.p { width: 35px; margin-left: 465px; }
.zb.p .ico { width: 24px; height: 22px; margin-bottom: -2px; }
.nine { width: 10px; margin: 5px 0 0 -2px; line-height: 18px; }
.c3 { margin-left: 23px; }
.zb.c { width: 23px; margin-left: 35px; }
.zb.s { width: 51px; margin-left: 52px; color: #23d959; }
.zb.s .ico { width: 24px; height: 18px; margin: 2px 0 0; }
.zb.cc { width: 90px; margin-left: 32px; }
.ccbox { width: 24px; height: 18px; margin-top: 2px; border-radius: 3px; background: #a8a8a8; color: #1a1a1a; font: 700 11px/18px "Noto Sans", sans-serif; text-align: center; }
.zb.r { width: 23px; margin-left: 36px; }

.task { position: absolute; left: 0; top: 1040px; width: 1920px; height: 40px; background: linear-gradient(90deg, #010205, #020511 60%, #010307); display: flex; z-index: 7; }
.ghost { position: absolute; left: 1246px; right: 0; top: 0; height: 26px; background: linear-gradient(#262626 0, #262626 15px, #17191e 16px, #0e1116 26px); border-radius: 0 0 0 8px; }
.tk { width: 48px; height: 40px; display: flex; align-items: center; justify-content: center; position: relative; flex: none; }
.s16 { width: 16px; height: 16px; }
.s20 { width: 20px; height: 18px; }
.s22 { width: 23px; height: 23px; }
.s24 { width: 24px; height: 24px; }
.run { border-bottom: 2px solid #ffdb8a; padding-top: 2px; height: 40px; }
.np { width: 40px; margin: 0 5px 0 7px; }
.gui { background: #34353a; border-right: 4px solid #26272b; padding-left: 3px; }
.kk { width: 40px; margin: 0 5px; }
.kk b { position: absolute; top: 14px; font: 700 6px/10px "Liberation Sans", sans-serif; color: #fae100; letter-spacing: .2px; }
.zm { background: #9b5620; border-color: #ff7a0a; padding-right: 1px; }
.tray { position: relative; margin-left: auto; display: flex; align-items: center; color: #fff; }
.tray > .ico { margin-right: 8px; width: 16px; }
.tray > .tc { width: 14px; height: 16px; margin-right: 9px; }
.ime { font: 400 19px/40px "Noto Sans", sans-serif; width: 13px; margin-right: 12px; }
.clock { width: 66px; display: flex; flex-direction: column; align-items: center; font: 12px/18px "Noto Sans", "Noto Sans CJK KR", sans-serif; margin-right: 19px; padding-bottom: 1px; }
.noti { position: relative; width: 16px; height: 16px; margin-right: 20px; }
.noti b { position: absolute; left: 7px; top: 7px; width: 17px; height: 17px; border-radius: 50%; background: #222; border: 1px solid #999; font: 600 11px/15px "Noto Sans", sans-serif; text-align: center; }
.peek { width: 5px; height: 40px; border-left: 1px solid #555; }
</style>
